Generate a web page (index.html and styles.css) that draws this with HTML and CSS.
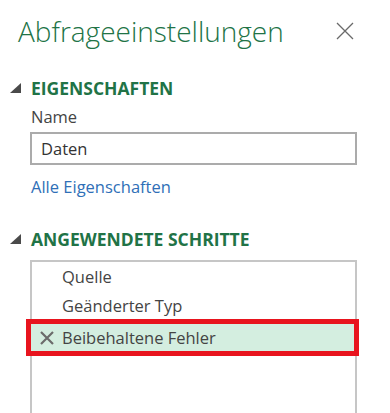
FILE: index.html
```html
<!DOCTYPE html>
<html lang="de">
<head>
    <meta charset="UTF-8">
    <meta name="viewport" content="width=device-width, initial-scale=1.0">
    <title>Abfrageeinstellungen</title>
    <link rel="stylesheet" href="styles.css">
</head>
<body>

    <div class="panel">
        <!-- Panel header with title and close button -->
        <header class="panel-head">
            <h1 class="panel-title">Abfrageeinstellungen</h1>
            <button class="close-btn" aria-label="Schließen">
                <svg width="18" height="18" viewBox="0 0 18 18">
                    <path d="M1 1 L17 17 M17 1 L1 17" stroke="#6a6a6a" stroke-width="1.3" fill="none"/>
                </svg>
            </button>
        </header>

        <!-- Properties -->
        <section class="group">
            <h2 class="group-title">
                <svg class="caret" width="11" height="10" viewBox="0 0 11 10">
                    <polygon points="0,10 11,0 11,10" fill="#4a4a4a"/>
                </svg>
                EIGENSCHAFTEN
            </h2>
            <div class="group-body">
                <div class="field-label">Name</div>
                <div class="field">Daten</div>
                <a class="link" href="#">Alle Eigenschaften</a>
            </div>
        </section>

        <!-- Applied steps -->
        <section class="group group-steps">
            <h2 class="group-title">
                <svg class="caret" width="11" height="10" viewBox="0 0 11 10">
                    <polygon points="0,10 11,0 11,10" fill="#4a4a4a"/>
                </svg>
                ANGEWENDETE SCHRITTE
            </h2>
            <div class="group-body">
                <ul class="steps">
                    <li class="step">Quelle</li>
                    <li class="step">Geänderter Typ</li>
                    <li class="step is-selected">
                        <svg class="step-del" width="14" height="14" viewBox="0 0 14 14">
                            <path d="M1 1 L13 13 M13 1 L1 13" stroke="#6b6b6b" stroke-width="2.2" fill="none"/>
                        </svg>
                        Beibehaltene Fehler
                    </li>
                </ul>
            </div>
        </section>
    </div>

</body>
</html>
```

FILE: styles.css
```css
/* Query settings side panel */
body {
    margin: 0;
    padding: 0;
    background: #ffffff;
    font-family: 'Open Sans', 'Noto Sans', sans-serif;
    color: #444444;
    overflow: hidden;
}

.panel {
    width: 390px;
    height: 413px;
    overflow: hidden;
}

/* --- header --- */
.panel-head {
    display: flex;
    align-items: center;
    justify-content: space-between;
    padding: 10px 36px 0 18px;
    height: 42px;
}

.panel-title {
    margin: 0;
    font-size: 28px;
    font-weight: 300;
    color: #217346;
}

.close-btn {
    border: none;
    background: none;
    padding: 0;
    width: 18px;
    height: 18px;
    display: flex;
}

/* --- sections --- */
.group {
    margin-top: 26px;
}

.group-steps {
    margin-top: 32px;
}

.group-title {
    display: flex;
    align-items: center;
    gap: 10px;
    margin: 0;
    padding-left: 10px;
    font-size: 17.5px;
    font-weight: bold;
    color: #217346;
    line-height: 20px;
}

.group-body {
    padding: 0 33px 0 30px;
}

.field-label {
    margin-top: 9px;
    padding-left: 1px;
    font-size: 16.5px;
    line-height: 20px;
}

.field {
    margin-top: 5px;
    height: 29px;
    border: 2px solid #ababab;
    padding: 0 9px;
    font-size: 16.5px;
    line-height: 29px;
    color: #333;
}

.link {
    display: block;
    margin-top: 12px;
    padding-left: 1px;
    font-size: 16.5px;
    line-height: 20px;
    color: #2f6fb7;
    text-decoration: none;
}

/* --- applied steps list --- */
.steps {
    list-style: none;
    margin: 11px 0 0;
    padding: 0 0 120px;
    border: 2px solid #c6c6c6;
}

.step {
    display: flex;
    align-items: center;
    height: 29px;
    padding-left: 30px;
    font-size: 16.5px;
}

.step.is-selected {
    height: 27px;
    margin: 4px 1px 0 -1px;
    padding-left: 9px;
    gap: 8px;
    background: #d4eee0;
    outline: 5px solid #e8141e;
}
```
